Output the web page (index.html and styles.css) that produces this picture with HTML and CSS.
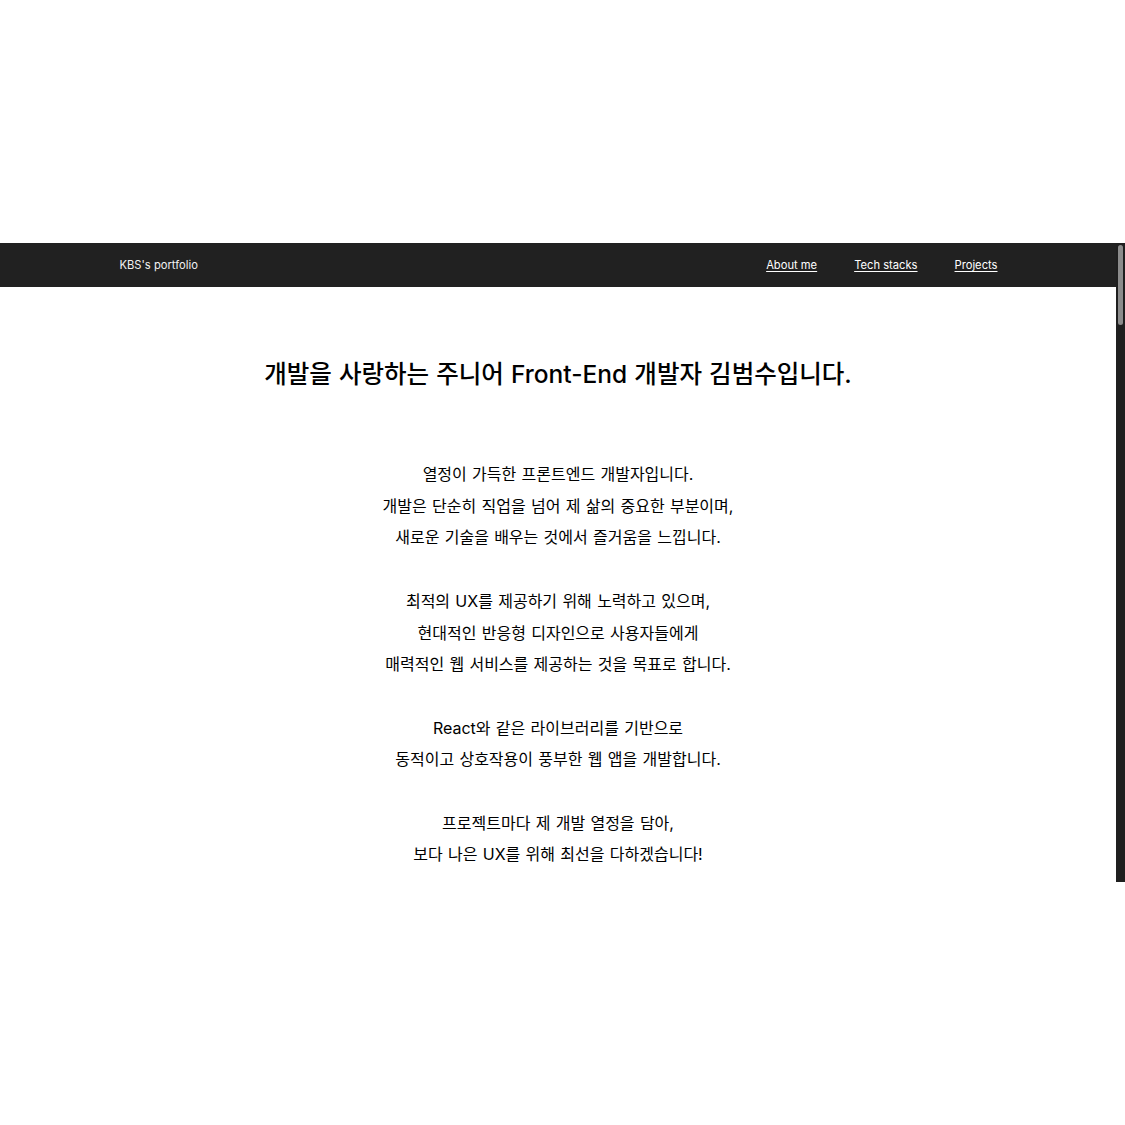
FILE: index.html
```html
<!DOCTYPE html>
<html lang="ko">
<head>
<meta charset="utf-8">
<title>KBS's portfolio</title>
<link rel="stylesheet" href="styles.css">
</head>
<body>
<div class="top-space"></div>
<div class="viewport">
  <div class="page">
    <header class="nav">
      <div class="nav-inner">
        <span class="brand">KBS's portfolio</span>
        <nav class="links">
          <a href="#about">About me</a>
          <a href="#tech">Tech stacks</a>
          <a href="#projects">Projects</a>
        </nav>
      </div>
    </header>
    <main class="main">
      <h1 class="title">개발을 사랑하는 주니어 Front-End 개발자 김범수입니다.</h1>
      <div class="intro">
        <p>열정이 가득한 프론트엔드 개발자입니다.<br>개발은 단순히 직업을 넘어 제 삶의 중요한 부분이며,<br>새로운 기술을 배우는 것에서 즐거움을 느낍니다.</p>
        <p>최적의 UX를 제공하기 위해 노력하고 있으며,<br>현대적인 반응형 디자인으로 사용자들에게<br>매력적인 웹 서비스를 제공하는 것을 목표로 합니다.</p>
        <p>React와 같은 라이브러리를 기반으로<br>동적이고 상호작용이 풍부한 웹 앱을 개발합니다.</p>
        <p>프로젝트마다 제 개발 열정을 담아,<br>보다 나은 UX를 위해 최선을 다하겠습니다!</p>
      </div>
    </main>
  </div>
  <div class="scrollbar"><div class="thumb"></div></div>
</div>
</body>
</html>
```
FILE: styles.css
```css
html, body {
  margin: 0;
  padding: 0;
  background: #ffffff;
}
body {
  font-family: Inter, "Noto Sans CJK KR", sans-serif;
  color: #000000;
}
.top-space {
  height: 243px;
}
.viewport {
  display: flex;
  width: 1125px;
  height: 639px;
  overflow: hidden;
}
.page {
  flex: 1;
  min-width: 0;
  background: #ffffff;
}
.scrollbar {
  width: 9px;
  background: #1f1f1f;
  padding-top: 2px;
  box-sizing: border-box;
}
.thumb {
  width: 5px;
  height: 80px;
  margin-left: 2px;
  border-radius: 3px;
  background: #8c8c8c;
}
.nav {
  height: 44px;
  background: #212121;
  color: #ffffff;
}
.nav-inner {
  width: 878px;
  height: 100%;
  margin: 0 auto;
  padding-left: 1px;
  display: flex;
  align-items: center;
  justify-content: space-between;
  font-size: 11.2px;
}
.brand {
  color: #f2f2f2;
}
.links {
  display: flex;
  gap: 37px;
}
.links a {
  color: #ffffff;
  text-decoration: underline;
  text-underline-offset: 2px;
}
.main {
  text-align: center;
}
.title {
  margin: 0;
  padding-top: 71px;
  font-size: 24.5px;
  font-weight: 500;
  word-spacing: 0.6px;
  line-height: 32px;
  color: #000000;
}
.intro {
  padding-top: 69px;
  font-size: 16px;
  word-spacing: 0.8px;
  line-height: 31.7px;
  color: #000000;
}
.intro p {
  margin: 0 0 31.7px 0;
}
```
